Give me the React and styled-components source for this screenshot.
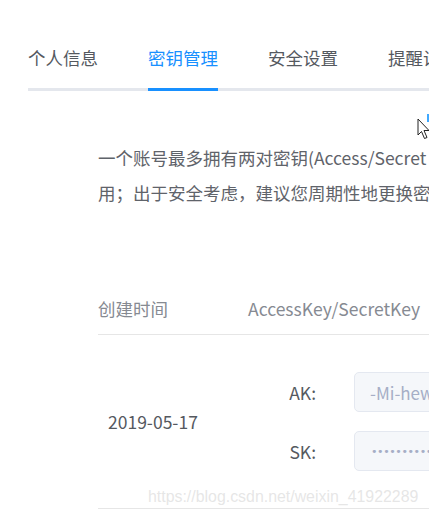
import React from "react";
import styled, { createGlobalStyle } from "styled-components";

const Global = createGlobalStyle`
  html, body { margin: 0; padding: 0; background: #fff; }
  body {
    width: 429px;
    height: 515px;
    overflow: hidden;
    font-family: "Noto Sans CJK SC", "Noto Sans", sans-serif;
  }
`;

const Page = styled.div`
  position: relative;
  width: 760px;
  padding: 46px 0 0 28px;
  box-sizing: border-box;
`;

const TabBar = styled.div`
  display: flex;
  gap: 50px;
  border-bottom: 3px solid #e4e7ed;
`;

const Tab = styled.div`
  font-size: 17.5px;
  line-height: 24px;
  padding-bottom: 18px;
  margin-bottom: -3px;
  color: ${(p) => (p.$active ? "#1890ff" : "#55595f")};
  border-bottom: 3px solid ${(p) => (p.$active ? "#1890ff" : "transparent")};
  white-space: nowrap;
`;

const Content = styled.div`
  padding-left: 70px;
`;

const Actions = styled.div`
  display: flex;
  height: 49px;
  padding-left: 329px;
  align-items: flex-start;
`;

const LinkStub = styled.span`
  margin-top: 23px;
  width: 3px;
  height: 8px;
  background: #40a9ff;
`;

const Intro = styled.p`
  margin: 0;
  font-size: 17.5px;
  line-height: 35px;
  color: #5f636a;
  white-space: nowrap;
`;

const Table = styled.div`
  margin-top: 87px;
  width: 620px;
`;

const HeaderRow = styled.div`
  display: grid;
  grid-template-columns: 150px 1fr;
  padding-bottom: 13px;
  border-bottom: 1px solid #e6e6e6;
`;

const HeadCell = styled.div`
  font-size: 17.5px;
  line-height: 24px;
  color: #868a92;
`;

const BodyRow = styled.div`
  display: grid;
  grid-template-columns: 150px 1fr;
  align-items: center;
  padding: 37px 0;
  border-bottom: 1px solid #e6e6e6;
`;

const DateCell = styled.div`
  padding-left: 10px;
  font-size: 17.5px;
  color: #55595f;
`;

const KeyList = styled.div`
  display: flex;
  flex-direction: column;
  gap: 19px;
`;

const KeyRow = styled.div`
  display: grid;
  grid-template-columns: 68px 1fr;
  column-gap: 38px;
  align-items: center;
`;

const KeyLabel = styled.span`
  text-align: right;
  font-size: 17.5px;
  color: #55595f;
`;

const KeyInput = styled.input`
  height: 40px;
  width: 300px;
  box-sizing: border-box;
  padding: 0 ${(p) => (p.$masked ? "16px" : "15px")};
  border: 1px solid #e4e8f0;
  border-radius: 5px;
  background: #f5f7fa;
  color: #a6aec6;
  font-family: ${(p) =>
    p.$masked ? '"DejaVu Sans", sans-serif' : '"Noto Sans CJK SC", "Noto Sans", sans-serif'};
  font-size: ${(p) => (p.$masked ? "11px" : "17px")};
  letter-spacing: ${(p) => (p.$masked ? "-0.4px" : "0")};
  outline: none;
`;

const Watermark = styled.div`
  position: absolute;
  left: 148px;
  top: 484px;
  font-family: "Liberation Sans", Arial, sans-serif;
  font-size: 15.9px;
  line-height: 26px;
  color: rgba(205, 205, 205, 0.5);
  white-space: nowrap;
  pointer-events: none;
`;

const Cursor = styled.svg`
  position: absolute;
  left: 417px;
  top: 118px;
`;

export default function App() {
  return (
    <>
      <Global />
      <Page>
        <TabBar>
          <Tab>个人信息</Tab>
          <Tab $active>密钥管理</Tab>
          <Tab>安全设置</Tab>
          <Tab>提醒设置</Tab>
        </TabBar>
        <Content>
          <Actions>
            <LinkStub />
          </Actions>
          <Intro>
            一个账号最多拥有两对密钥(Access/Secret Key)，禁用状态的密钥不可使
            <br />
            用；出于安全考虑，建议您周期性地更换密钥。
          </Intro>
          <Table>
            <HeaderRow>
              <HeadCell>创建时间</HeadCell>
              <HeadCell>AccessKey/SecretKey</HeadCell>
            </HeaderRow>
            <BodyRow>
              <DateCell>2019-05-17</DateCell>
              <KeyList>
                <KeyRow>
                  <KeyLabel>AK:</KeyLabel>
                  <KeyInput readOnly value="-Mi-hew.xKq9sLr2TzP" />
                </KeyRow>
                <KeyRow>
                  <KeyLabel>SK:</KeyLabel>
                  <KeyInput $masked readOnly value="••••••••••••••••••••••••" />
                </KeyRow>
              </KeyList>
            </BodyRow>
          </Table>
        </Content>
        <Watermark>https://blog.csdn.net/weixin_41922289</Watermark>
        <Cursor width="13" height="22" viewBox="0 0 13 22">
          <path
            d="M1 1 L1 17 L4.5 13.5 L7.5 20.5 L10 19.5 L7 12.5 L12 12.5 Z"
            fill="#fff"
            stroke="#222"
            strokeWidth="1"
            strokeLinejoin="round"
          />
        </Cursor>
      </Page>
    </>
  );
}
